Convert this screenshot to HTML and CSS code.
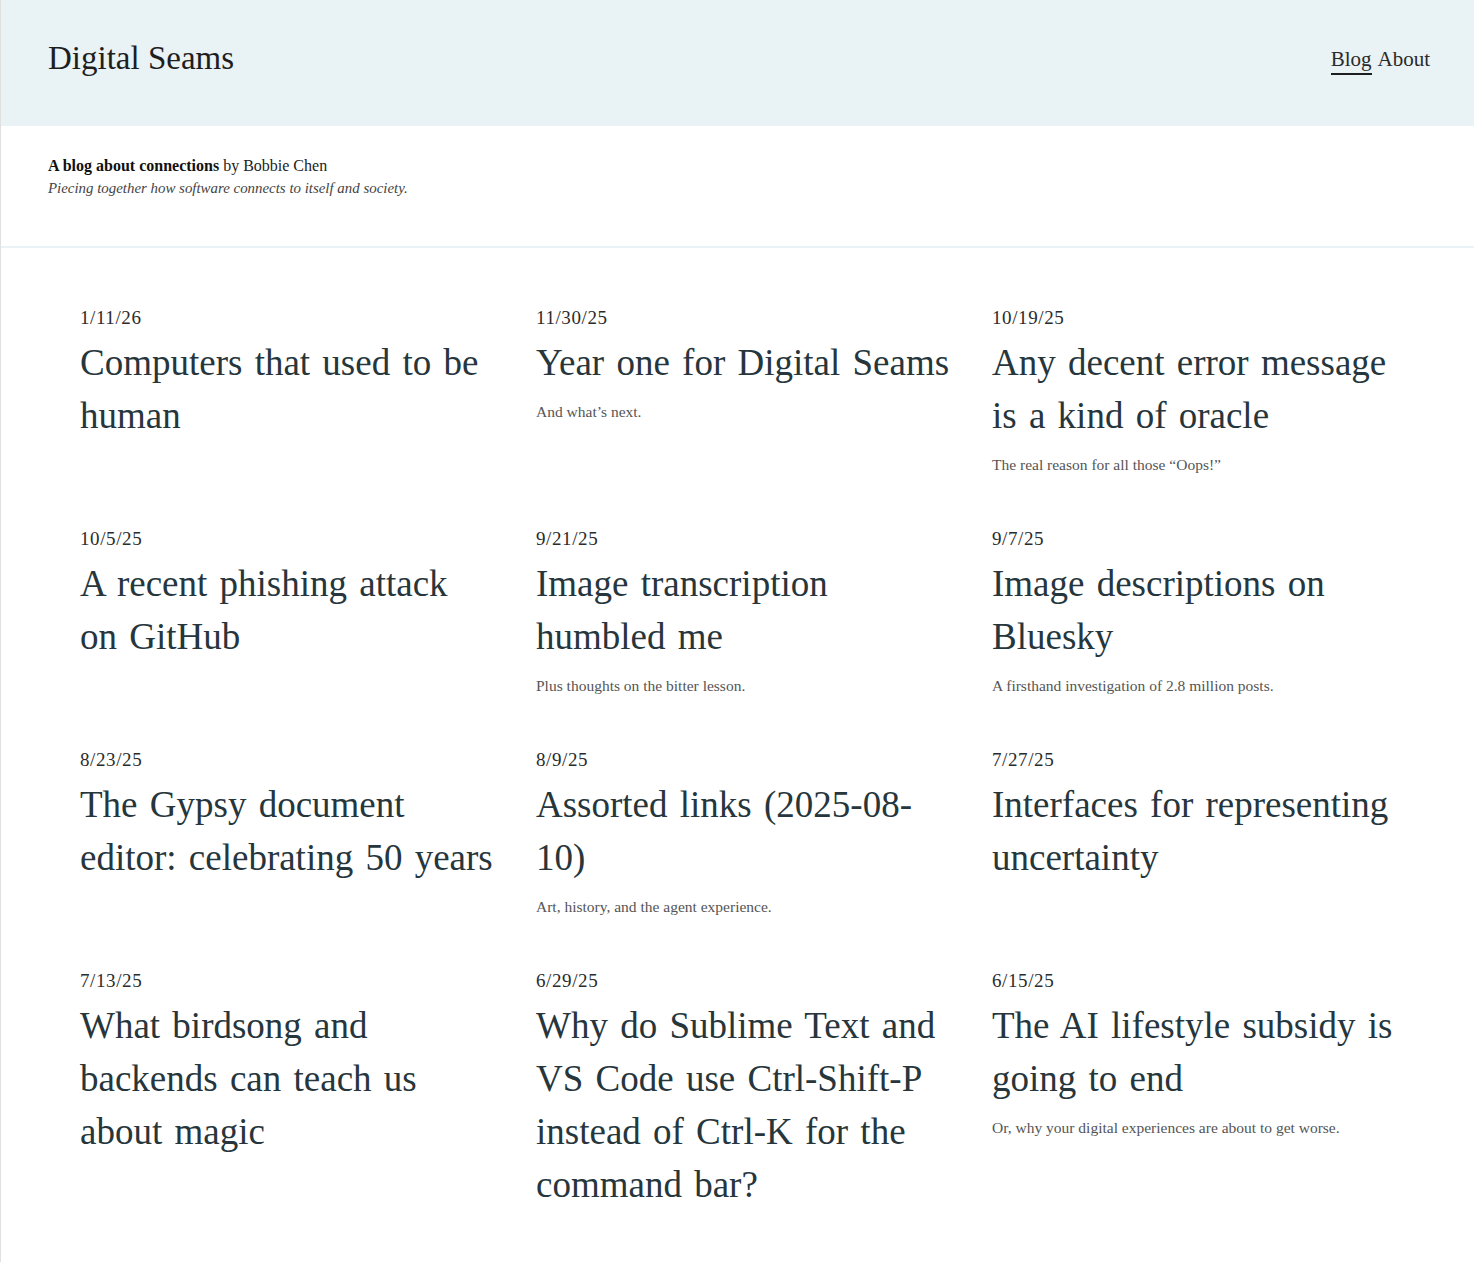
FILE: index.html
```html
<!DOCTYPE html>
<html lang="en">
<head>
  <meta charset="UTF-8">
  <title>Digital Seams</title>
  <meta name="viewport" content="width=device-width, initial-scale=1.0">
  <link rel="stylesheet" href="styles.css">
</head>
<body>
  <div class="page">
    <header class="site-header">
      <a class="site-title" href="#">Digital Seams</a>
      <nav class="site-nav">
        <a href="#" class="current">Blog</a>
        <a href="#">About</a>
      </nav>
    </header>

    <section class="intro">
      <p class="intro-line"><strong>A blog about connections</strong> by Bobbie Chen</p>
      <p class="intro-tagline">Piecing together how software connects to itself and society.</p>
    </section>

    <main class="posts">
      <article class="post">
        <div class="post-date">1/11/26</div>
        <h2 class="post-title"><a href="#">Computers that used to be human</a></h2>
      </article>
      <article class="post">
        <div class="post-date">11/30/25</div>
        <h2 class="post-title"><a href="#">Year one for Digital Seams</a></h2>
        <p class="post-sub">And what’s next.</p>
      </article>
      <article class="post">
        <div class="post-date">10/19/25</div>
        <h2 class="post-title"><a href="#">Any decent error message is a kind of oracle</a></h2>
        <p class="post-sub">The real reason for all those “Oops!”</p>
      </article>

      <article class="post">
        <div class="post-date">10/5/25</div>
        <h2 class="post-title"><a href="#">A recent phishing attack on GitHub</a></h2>
      </article>
      <article class="post">
        <div class="post-date">9/21/25</div>
        <h2 class="post-title"><a href="#">Image transcription humbled me</a></h2>
        <p class="post-sub">Plus thoughts on the bitter lesson.</p>
      </article>
      <article class="post">
        <div class="post-date">9/7/25</div>
        <h2 class="post-title"><a href="#">Image descriptions on Bluesky</a></h2>
        <p class="post-sub">A firsthand investigation of 2.8 million posts.</p>
      </article>

      <article class="post">
        <div class="post-date">8/23/25</div>
        <h2 class="post-title"><a href="#">The Gypsy document editor: celebrating 50 years</a></h2>
      </article>
      <article class="post">
        <div class="post-date">8/9/25</div>
        <h2 class="post-title"><a href="#">Assorted links (2025-08-10)</a></h2>
        <p class="post-sub">Art, history, and the agent experience.</p>
      </article>
      <article class="post">
        <div class="post-date">7/27/25</div>
        <h2 class="post-title"><a href="#">Interfaces for representing uncertainty</a></h2>
      </article>

      <article class="post">
        <div class="post-date">7/13/25</div>
        <h2 class="post-title"><a href="#">What birdsong and backends can teach us about magic</a></h2>
      </article>
      <article class="post">
        <div class="post-date">6/29/25</div>
        <h2 class="post-title"><a href="#">Why do Sublime Text and VS Code use Ctrl-Shift-P instead of Ctrl-K for the command bar?</a></h2>
      </article>
      <article class="post">
        <div class="post-date">6/15/25</div>
        <h2 class="post-title"><a href="#">The AI lifestyle subsidy is going to end</a></h2>
        <p class="post-sub">Or, why your digital experiences are about to get worse.</p>
      </article>
    </main>
  </div>
</body>
</html>
```

FILE: styles.css
```css
body {
  margin: 0;
  font-family: "Liberation Serif", "Times New Roman", serif;
  color: #222;
  background: #fff;
}
a {
  color: inherit;
  text-decoration: none;
}
.page {
  border-left: 1px solid #e0e0e0;
  min-height: 100vh;
}
.site-header {
  display: flex;
  justify-content: space-between;
  align-items: center;
  height: 126px;
  padding: 0 44px 0 47px;
  background: #e9f2f5;
}
.site-title {
  font-size: 33px;
  color: #1e1e1e;
  margin-top: -10px;
}
.site-nav {
  display: flex;
  gap: 6px;
  font-size: 21px;
  color: #2a2a2a;
  margin-top: -4px;
}
.site-nav a {
  padding-bottom: 1px;
  border-bottom: 2px solid transparent;
}
.site-nav a.current {
  border-bottom-color: #1e1e1e;
}
.intro {
  height: 122px;
  box-sizing: border-box;
  padding: 29px 47px 0;
  border-bottom: 2px solid #e9f2f5;
}
.intro p {
  margin: 0;
}
.intro-line {
  font-size: 16px;
  line-height: 22px;
  color: #222;
}
.intro-line strong {
  color: #111;
}
.intro-tagline {
  font-size: 14.9px;
  font-style: italic;
  line-height: 22px;
  color: #444;
  margin-top: 6px;
}
.posts {
  display: grid;
  grid-template-columns: repeat(3, 414px);
  column-gap: 42px;
  row-gap: 52px;
  padding: 58px 0 60px 79px;
}
.post-date {
  font-size: 19px;
  letter-spacing: 0.6px;
  line-height: 24px;
  color: #2b2b2b;
  margin-bottom: 6px;
}
.post-title {
  margin: 0;
  font-weight: normal;
  font-size: 37px;
  word-spacing: 3px;
  line-height: 53px;
  color: #26363c;
}
.post-sub {
  margin: 12px 0 0;
  font-size: 15.5px;
  line-height: 21px;
  color: #555;
}
```
